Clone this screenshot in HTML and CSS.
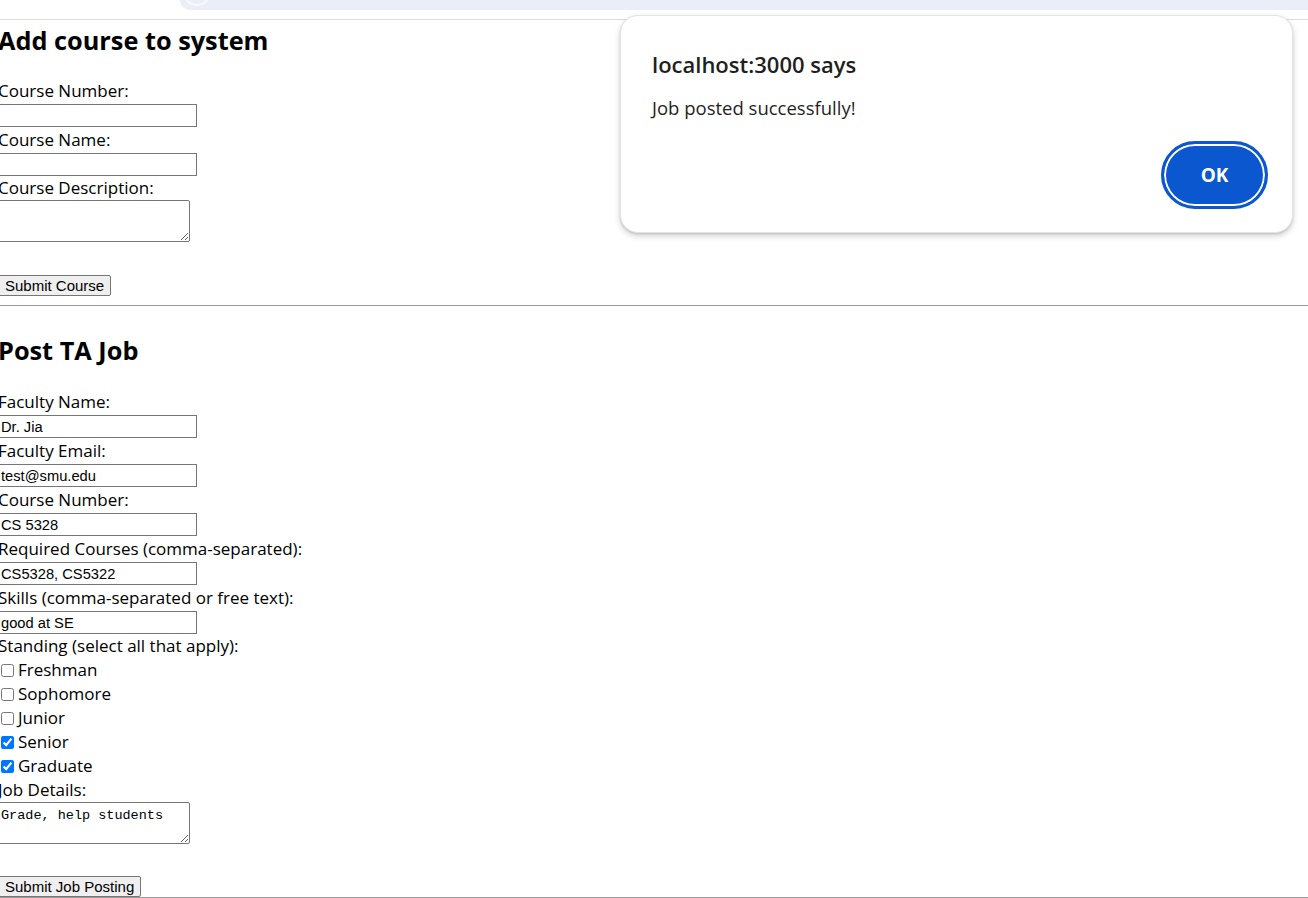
FILE: index.html
```html
<!DOCTYPE html>
<html>
<head>
<meta charset="utf-8">
<title>TA System</title>
<link rel="stylesheet" href="styles.css">
</head>
<body>
<div class="chrome">
  <div class="omnibar"><span class="omni-dot"></span></div>
</div>
<div class="page">
  <section class="form-section">
    <h2 class="title">Add course to system</h2>
    <label class="lbl">Course Number:</label>
    <input class="field" type="text">
    <label class="lbl">Course Name:</label>
    <input class="field" type="text">
    <label class="lbl lbl-short">Course Description:</label>
    <textarea class="area"></textarea>
    <button class="btn" type="button">Submit Course</button>
  </section>
  <hr class="rule">
  <section class="form-section">
    <h2 class="title title-second">Post TA Job</h2>
    <label class="lbl">Faculty Name:</label>
    <input class="field" type="text" value="Dr. Jia">
    <label class="lbl">Faculty Email:</label>
    <input class="field" type="text" value="test@smu.edu">
    <label class="lbl">Course Number:</label>
    <input class="field" type="text" value="CS 5328">
    <label class="lbl">Required Courses (comma-separated):</label>
    <input class="field" type="text" value="CS5328, CS5322">
    <label class="lbl">Skills (comma-separated or free text):</label>
    <input class="field" type="text" value="good at SE">
    <label class="lbl lbl-short">Standing (select all that apply):</label>
    <label class="check"><input type="checkbox">Freshman</label>
    <label class="check"><input type="checkbox">Sophomore</label>
    <label class="check"><input type="checkbox">Junior</label>
    <label class="check"><input type="checkbox" checked>Senior</label>
    <label class="check"><input type="checkbox" checked>Graduate</label>
    <label class="lbl lbl-short">Job Details:</label>
    <textarea class="area area-last">Grade, help students</textarea>
    <button class="btn" type="button">Submit Job Posting</button>
  </section>
  <hr class="rule rule-end">
</div>

<div class="dialog" role="alertdialog">
  <div class="dialog-title">localhost:3000 says</div>
  <div class="dialog-msg">Job posted successfully!</div>
  <div class="dialog-actions">
    <button class="ok" type="button">OK</button>
  </div>
</div>
</body>
</html>
```

FILE: styles.css
```css
html, body {
  margin: 0;
  padding: 0;
  background: #ffffff;
  overflow: hidden;
}
body {
  width: 1308px;
  height: 898px;
  font-family: "Open Sans", "Noto Sans", sans-serif;
  color: #000;
}
.chrome {
  height: 19px;
  border-bottom: 1px solid #dcdcdc;
  box-sizing: content-box;
}
.omnibar {
  position: relative;
  margin-left: 180px;
  height: 10px;
  background: #e9eef8;
  border-bottom-left-radius: 12px;
  overflow: hidden;
}
.omni-dot {
  position: absolute;
  left: 3px;
  top: -22px;
  width: 28px;
  height: 28px;
  border-radius: 50%;
  border: 2px solid #f7f9fd;
  box-sizing: border-box;
}
.page {
  margin-left: -2px;
}
.form-section {
  display: flex;
  flex-direction: column;
  align-items: flex-start;
}
.title {
  margin: 4px 0 22px 0;
  font-size: 25.3px;
  line-height: 32px;
  font-weight: 700;
  white-space: nowrap;
}
.title-second {
  margin-top: 28px;
}
.title-second + .lbl {
  margin-top: 1px;
}
.lbl {
  display: block;
  font-size: 17px;
  line-height: 26px;
  height: 26px;
  white-space: nowrap;
}
.lbl-short {
  height: 24px;
  line-height: 24px;
}
.field {
  box-sizing: border-box;
  width: 199px;
  height: 23px;
  margin: 0;
  padding: 1px 2px;
  border: 1px solid #767676;
  border-radius: 0;
  font-family: "Liberation Sans", Arial, sans-serif;
  font-size: 14.7px;
  color: #000;
  background: #fff;
}
.area {
  box-sizing: border-box;
  width: 192px;
  height: 42px;
  margin: 0 0 33px 0;
  padding: 5px 2px 2px 2px;
  border: 1px solid #767676;
  border-radius: 2px;
  font-family: "Liberation Mono", "DejaVu Sans Mono", monospace;
  font-size: 13.5px;
  line-height: 16px;
  resize: both;
  color: #000;
}
.area-last {
  margin-bottom: 32px;
}
.btn {
  box-sizing: border-box;
  height: 21px;
  margin: 0;
  padding: 0 6px;
  border: 1px solid #767676;
  border-radius: 2px;
  background: #efefef;
  font-family: "Liberation Sans", Arial, sans-serif;
  font-size: 15px;
  line-height: 19px;
  color: #000;
  white-space: nowrap;
}
.rule {
  width: 100%;
  margin: 9px 0 0 0;
  border: 0;
  border-top: 1px solid #9a9a9a;
  height: 0;
}
.rule-end {
  margin-top: 0;
}
.check {
  display: flex;
  align-items: center;
  height: 24px;
  font-size: 17px;
  line-height: 24px;
  white-space: nowrap;
}
.check input {
  width: 13px;
  height: 13px;
  margin: 0 4px 0 3px;
  accent-color: #0075ff;
}

.dialog {
  position: absolute;
  left: 620px;
  top: 15px;
  width: 673px;
  height: 218px;
  box-sizing: border-box;
  padding: 33px 24px 24px 31px;
  background: #fff;
  border-radius: 18px;
  border: 1px solid #e4e4e4;
  box-shadow: 0 3px 6px rgba(0,0,0,0.18), 0 1px 2px rgba(0,0,0,0.12);
  font-family: "Open Sans", "Noto Sans", sans-serif;
  color: #1f1f1f;
}
.dialog-title {
  font-size: 22px;
  font-weight: 600;
  line-height: 30px;
  white-space: nowrap;
}
.dialog-msg {
  margin-top: 15px;
  font-size: 18.5px;
  line-height: 28px;
  white-space: nowrap;
}
.dialog-actions {
  display: flex;
  justify-content: flex-end;
  margin-top: 19px;
}
.ok {
  width: 107px;
  height: 68px;
  box-sizing: border-box;
  border-radius: 34px;
  border: 3px solid #0b57d0;
  box-shadow: inset 0 0 0 2px #ffffff;
  background: #0b57d0;
  color: #fff;
  font-family: "Open Sans", "Noto Sans", sans-serif;
  font-size: 19px;
  font-weight: 700;
  padding: 0;
}
```
